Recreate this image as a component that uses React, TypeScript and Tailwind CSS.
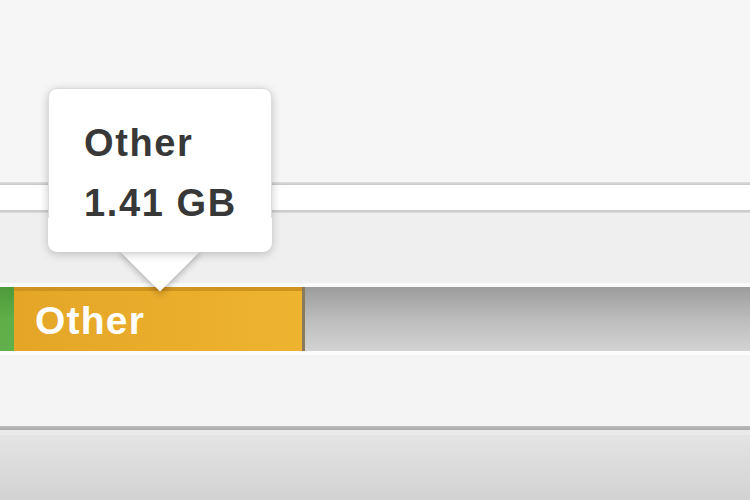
import React from "react";

export default function App() {
  return (
    <div className="relative w-[750px] h-[500px] overflow-hidden bg-[#f5f5f5] font-['Liberation_Sans',Arial,sans-serif]">
      <div className="flex flex-col h-full">
        <div className="h-[182px] bg-[#f6f6f6]" />
        <div className="h-[3px] bg-gradient-to-b from-[#e0e0e0] to-[#c6c6c6]" />
        <div className="h-[25px] bg-white" />
        <div className="h-[3px] bg-gradient-to-b from-[#c6c6c6] to-[#dcdcdc]" />
        <div className="h-[70px] bg-[#efefef]" />
        <div className="h-[4px] bg-[#fafafa]" />

        {/* storage bar */}
        <div className="flex h-[64px]">
          <div className="w-[14px] bg-gradient-to-b from-[#4f9a3b] via-[#5fae48] to-[#62b04b]" />
          <div className="relative w-[291px] flex items-center bg-gradient-to-r from-[#e5a627] via-[#e9ac2b] to-[#eeb430] border-t-[4px] border-[#cf9420]">
            <span className="pl-[21px] text-white text-[39px] font-bold leading-none -mt-[2px] tracking-[1.2px]">Other</span>
            <div className="absolute right-0 top-[-4px] bottom-0 w-[3px] bg-[#8a7a5c]" />
          </div>
          <div className="flex-1 bg-gradient-to-b from-[#9c9c9c] via-[#bcbcbc] to-[#d3d3d3]" />
        </div>

        <div className="h-[4px] bg-[#fbfbfb]" />
        <div className="h-[71px] bg-[#f4f4f4]" />
        <div className="h-[4px] bg-gradient-to-b from-[#bdbdbd] to-[#a9a9a9]" />
        <div className="h-[5px] bg-[#e9e9e9]" />
        <div className="flex-1 bg-gradient-to-b from-[#e4e4e4] to-[#d2d2d2]" />
      </div>

      {/* tooltip */}
      <div className="absolute left-[48px] top-[88px] w-[224px] h-[164px]">
        <div className="absolute left-1/2 top-[136px] w-[56px] h-[56px] -translate-x-1/2 rotate-45 bg-white shadow-[2px_2px_6px_rgba(0,0,0,0.25)]" />
        <div className="absolute inset-0 rounded-[9px] bg-white shadow-[0_2px_10px_rgba(0,0,0,0.22)] border border-[#dcdcdc]" />
        <div className="absolute left-[-0.5px] right-0 top-[130px] h-[34px] bg-white rounded-b-[9px]" />
        <div className="relative pl-[36px] pt-[25px] flex flex-col text-[#383838] text-[38px] font-bold leading-[60px] tracking-[1.6px]">
          <span>Other</span>
          <span>1.41 GB</span>
        </div>
      </div>
    </div>
  );
}
